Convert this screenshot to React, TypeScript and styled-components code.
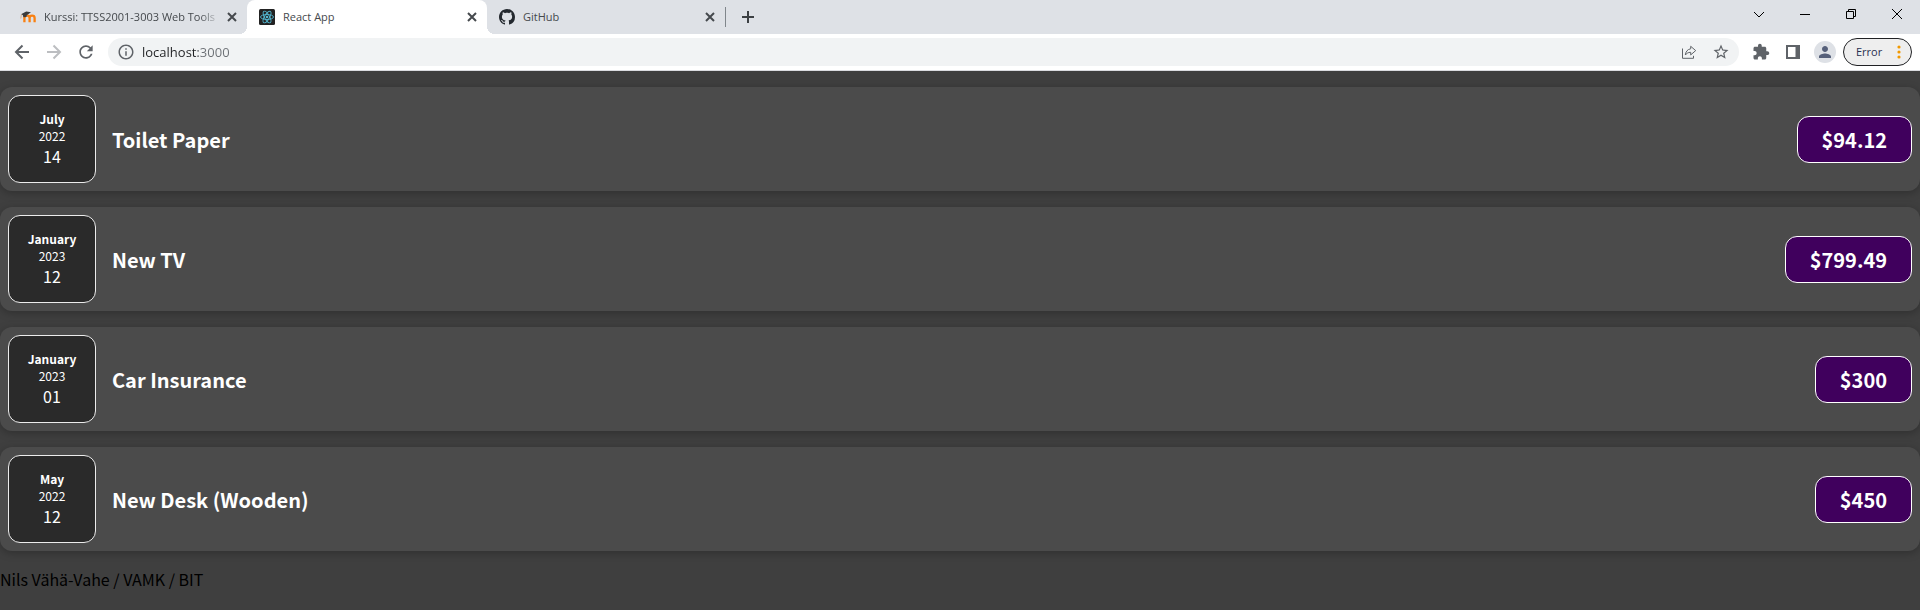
import React from "react";
import styled, { createGlobalStyle } from "styled-components";

const GlobalStyle = createGlobalStyle`
  *, *::before, *::after { box-sizing: border-box; }
  html, body, #root { min-height: 100vh; }
  body {
    margin: 0;
    background: #3f3f3f;
    font-family: "Noto Sans CJK JP", "Noto Sans", sans-serif;
  }
  button, input { font: inherit; }
`;

const chromeFont = `"Open Sans", "Noto Sans", sans-serif`;

const Browser = styled.div`
  display: flex;
  flex-direction: column;
  min-height: 100vh;
`;

const TabStrip = styled.header`
  display: flex;
  height: 34px;
  background: #dee1e6;
  font: 11px/16px ${chromeFont};
`;

const Tabs = styled.nav`
  display: flex;
  align-items: stretch;
`;

const Tab = styled.div<{ $active?: boolean; $width: number; $inset?: number }>`
  position: relative;
  display: flex;
  align-items: center;
  gap: 4px;
  width: ${(p) => p.$width}px;
  padding: 0 7px 0 ${(p) => p.$inset ?? 12}px;
  border-radius: 8px 8px 0 0;
  background: ${(p) => (p.$active ? "#ffffff" : "transparent")};

  &::before,
  &::after {
    content: "";
    display: ${(p) => (p.$active ? "block" : "none")};
    position: absolute;
    bottom: 0;
    width: 8px;
    height: 8px;
  }
  &::before {
    left: -8px;
    background: radial-gradient(circle at 0 0, transparent 8px, #ffffff 8px);
  }
  &::after {
    right: -8px;
    background: radial-gradient(circle at 100% 0, transparent 8px, #ffffff 8px);
  }
`;

const PlainButton = styled.button`
  display: flex;
  align-items: center;
  justify-content: center;
  flex: none;
  padding: 0;
  border: 0;
  background: none;
  color: #5f6368;
`;

const TabTitle = styled(PlainButton)<{ $fade?: boolean }>`
  flex: 1;
  min-width: 0;
  padding-left: 4px;
  justify-content: flex-start;
  overflow: hidden;
  white-space: nowrap;
  color: #45494d;
  mask-image: ${(p) =>
    p.$fade
      ? "linear-gradient(to right, #000 calc(100% - 20px), transparent)"
      : "none"};
`;

const CloseButton = styled(PlainButton)`
  width: 16px;
  height: 16px;
  color: #45494d;
`;

const NewTab = styled.div`
  display: flex;
  align-items: center;
`;

const Divider = styled.span`
  width: 1px;
  height: 20px;
  background: #80868b;
`;

const NewTabButton = styled(PlainButton)`
  width: 28px;
  height: 28px;
  margin-left: 8px;
  color: #3c4043;
`;

const WindowControls = styled.div`
  display: flex;
  height: 28px;
  margin-left: auto;
`;

const WindowButton = styled(PlainButton)`
  width: 46px;
  color: #000000;
`;

const Toolbar = styled.div`
  display: flex;
  align-items: center;
  gap: 8px;
  height: 37px;
  padding: 0 8px 1px;
  border-bottom: 1px solid #dadce0;
  background: #ffffff;
  font: 13px/20px ${chromeFont};
`;

const NavGroup = styled.div`
  display: flex;
  gap: 4px;
`;

const ToolButton = styled(PlainButton)`
  width: 28px;
  height: 28px;

  &:disabled {
    color: #bcbec1;
  }
`;

const AddressBar = styled.div`
  display: flex;
  flex: 1;
  align-items: center;
  height: 28px;
  padding: 0 4px;
  border-radius: 14px;
  background: #f1f3f4;
`;

const AddressInput = styled.input`
  flex: 1;
  min-width: 0;
  height: 20px;
  margin-left: 2px;
  padding: 0;
  border: 0;
  outline: 0;
  background: linear-gradient(to right, #202124 56px, #6b6f74 56px);
  background-clip: text;
  color: transparent;
`;

const Actions = styled.div`
  display: flex;
  align-items: center;
  gap: 4px;
`;

const Avatar = styled(PlainButton)`
  width: 22px;
  height: 22px;
  margin: 0 3px;
  overflow: hidden;
  border-radius: 50%;
  background: #dee1e6;
  color: #56607a;
`;

const ErrorButton = styled(PlainButton)`
  justify-content: space-between;
  width: 69px;
  height: 28px;
  padding: 0 5px 0 12px;
  border: 1px solid #202124;
  border-radius: 14px;
  background: #eeeeee;
  color: #2a3050;
  font-size: 11px;
`;

const Page = styled.main`
  flex: 1;
  background: #3f3f3f;
`;

const ExpenseList = styled.ul`
  display: flex;
  flex-direction: column;
  gap: 16px;
  margin: 0;
  padding: 16px 0;
  list-style: none;
`;

const ExpenseCard = styled.li`
  display: flex;
  align-items: center;
  gap: 16px;
  padding: 8px;
  border-radius: 12px;
  background: #4b4b4b;
  box-shadow: 0 2px 8px rgba(0, 0, 0, 0.25);
`;

const DateBox = styled.time`
  display: flex;
  flex-direction: column;
  align-items: center;
  justify-content: center;
  width: 88px;
  height: 88px;
  border: 1px solid #ececec;
  border-radius: 12px;
  background: #2a2a2a;
  color: #ffffff;
`;

const Month = styled.span`
  font-size: 12px;
  font-weight: 700;
  line-height: 17px;
`;

const Year = styled.span`
  font-size: 12px;
  line-height: 17px;
`;

const Day = styled.span`
  font-size: 16px;
  line-height: 24px;
`;

const Title = styled.h2`
  flex: 1;
  margin: 0;
  color: #ffffff;
  font-size: 20px;
  line-height: 29px;
`;

const Price = styled.div`
  padding: 8px 24px;
  border: 1px solid #ffffff;
  border-radius: 12px;
  background: #40005d;
  color: #ffffff;
  font-size: 20px;
  font-weight: 700;
  line-height: 29px;
`;

const Author = styled.footer`
  color: #000000;
  font-size: 16px;
  line-height: 24px;
`;

const MoodleIcon = () => (
  <svg width="16" height="16" viewBox="0 0 16 16" aria-hidden="true">
    <path d="M4.400 13.200V9q0-2.300 2.600-2.300T9.600 9v4.200M9.600 13.200V9q0-2.300 2.500-2.300T14.600 9v4.200" fill="none" stroke="#f98012" strokeWidth="2.300" />
    <path d="M1 5.200 6.200 2.600 11 3.200 6.800 6.200 6.400 8 3.400 8.200 2.800 6Z" fill="#3c3c3c" />
    <path d="M1.400 5.500.8 9.500" fill="none" stroke="#d9a77c" strokeWidth=".8" />
  </svg>
);

const ReactIcon = () => (
  <svg width="16" height="16" viewBox="0 0 16 16" aria-hidden="true">
    <rect width="16" height="16" rx="1.500" fill="#222222" />
    <g fill="none" stroke="#53b8d1" strokeWidth=".9">
      <ellipse cx="8" cy="8" rx="6.500" ry="2.500" />
      <ellipse cx="8" cy="8" rx="6.500" ry="2.500" transform="rotate(60 8 8)" />
      <ellipse cx="8" cy="8" rx="6.500" ry="2.500" transform="rotate(120 8 8)" />
    </g>
    <circle cx="8" cy="8" r="1.300" fill="#53b8d1" />
  </svg>
);

const GitHubIcon = () => (
  <svg width="16" height="16" viewBox="0 0 16 16" fill="#24292f" aria-hidden="true">
    <path d="M8 0C3.58 0 0 3.58 0 8c0 3.54 2.29 6.53 5.47 7.59.4.07.55-.17.55-.38 0-.19-.01-.82-.01-1.49-2.01.37-2.53-.49-2.69-.94-.09-.23-.48-.94-.82-1.13-.28-.15-.68-.52-.01-.53.63-.01 1.08.58 1.23.82.72 1.21 1.87.87 2.33.66.07-.52.28-.87.51-1.07-1.78-.2-3.64-.89-3.64-3.95 0-.87.31-1.59.82-2.15-.08-.2-.36-1.02.08-2.12 0 0 .67-.21 2.2.82.64-.18 1.32-.27 2-.27s1.36.09 2 .27c1.53-1.04 2.2-.82 2.2-.82.44 1.1.16 1.92.08 2.12.51.56.82 1.27.82 2.15 0 3.07-1.87 3.75-3.65 3.95.29.25.54.73.54 1.48 0 1.07-.01 1.93-.01 2.2 0 .21.15.46.55.38A8.01 8.01 0 0 0 16 8c0-4.42-3.58-8-8-8Z" />
  </svg>
);

const StrokeIcon = ({ d, size = 16, weight = 2 }: { d: string; size?: number; weight?: number }) => (
  <svg width={size} height={size} viewBox={`0 0 ${size} ${size}`} fill="none" stroke="currentColor" strokeWidth={weight} aria-hidden="true">
    <path d={d} />
  </svg>
);

const FillIcon = ({ d, size = 18 }: { d: string; size?: number }) => (
  <svg width={size} height={size} viewBox="0 0 24 24" fill="currentColor" aria-hidden="true">
    <path d={d} />
  </svg>
);

const tabs = [
  { title: "Kurssi: TTSS2001-3003 Web Tools", icon: <MoodleIcon />, fade: true, width: 247, inset: 20 },
  { title: "React App", icon: <ReactIcon />, active: true, width: 240 },
  { title: "GitHub", icon: <GitHubIcon />, width: 238 },
];

const expenses = [
  { title: "Toilet Paper", price: "$94.12", month: "July", year: "2022", day: "14", iso: "2022-07-14" },
  { title: "New TV", price: "$799.49", month: "January", year: "2023", day: "12", iso: "2023-01-12" },
  { title: "Car Insurance", price: "$300", month: "January", year: "2023", day: "01", iso: "2023-01-01" },
  { title: "New Desk (Wooden)", price: "$450", month: "May", year: "2022", day: "12", iso: "2022-05-12" },
];

export default function App() {
  return (
    <>
      <GlobalStyle />
      <Browser>
        <TabStrip>
          <Tabs aria-label="Open tabs">
            {tabs.map((tab) => (
              <Tab key={tab.title} $active={tab.active} $width={tab.width} $inset={tab.inset}>
                {tab.icon}
                <TabTitle $fade={tab.fade}>{tab.title}</TabTitle>
                <CloseButton aria-label={`Close ${tab.title}`}>
                  <StrokeIcon d="m4 4 8 8m0-8-8 8" />
                </CloseButton>
              </Tab>
            ))}
          </Tabs>
          <NewTab>
            <Divider />
            <NewTabButton aria-label="New tab">
              <StrokeIcon d="M8 2v12M2 8h12" />
            </NewTabButton>
          </NewTab>
          <WindowControls>
            <WindowButton aria-label="Search tabs">
              <StrokeIcon d="m3 6 5 5 5-5" weight={1} />
            </WindowButton>
            <WindowButton aria-label="Minimize">
              <StrokeIcon d="M3 8.500h10" weight={1} />
            </WindowButton>
            <WindowButton aria-label="Restore">
              <StrokeIcon d="M3.500 5.500h7v7h-7zM5.500 5V3.500h7v7H11" weight={1} />
            </WindowButton>
            <WindowButton aria-label="Close window">
              <StrokeIcon d="m3 3 10 10m0-10L3 13" weight={1} />
            </WindowButton>
          </WindowControls>
        </TabStrip>

        <Toolbar>
          <NavGroup>
            <ToolButton aria-label="Back">
              <StrokeIcon d="M15 8H2m6.500-6.500L2 8l6.500 6.500" />
            </ToolButton>
            <ToolButton aria-label="Forward" disabled>
              <StrokeIcon d="M1 8h13M7.500 1.500 14 8l-6.500 6.500" />
            </ToolButton>
            <ToolButton aria-label="Reload">
              <FillIcon size={20} d="M17.65 6.350C16.200 4.900 14.210 4 12 4c-4.420 0-7.990 3.580-7.990 8s3.570 8 7.990 8c3.730 0 6.840-2.550 7.730-6h-2.080c-.82 2.330-3.040 4-5.650 4-3.310 0-6-2.690-6-6s2.690-6 6-6c1.660 0 3.140.69 4.220 1.780L13 11h7V4l-2.350 2.350z" />
            </ToolButton>
          </NavGroup>
          <AddressBar>
            <ToolButton aria-label="Site information">
              <FillIcon d="M11 7h2v2h-2zm0 4h2v6h-2zm1-9C6.480 2 2 6.480 2 12s4.480 10 10 10 10-4.480 10-10S17.520 2 12 2zm0 18c-4.410 0-8-3.590-8-8s3.590-8 8-8 8 3.590 8 8-3.590 8-8 8z" />
            </ToolButton>
            <AddressInput aria-label="Address" defaultValue="localhost:3000" />
            <Actions>
              <ToolButton aria-label="Share">
                <StrokeIcon d="M1.500 4.500v9.800h11v-2.500M9.700 2.300l5 4.300-5 4.300V8.300C7 8.300 5.500 9.500 4.300 11c.4-3.200 2-5.700 5.400-6.200z" weight={1} />
              </ToolButton>
              <ToolButton aria-label="Bookmark">
                <FillIcon d="m22 9.240-7.190-.62L12 2 9.190 8.630 2 9.240l5.460 4.730L5.820 21 12 17.270 18.180 21l-1.630-7.030L22 9.240zM12 15.400l-3.760 2.270 1-4.280-3.320-2.880 4.380-.38L12 6.100l1.710 4.040 4.380.38-3.320 2.880 1 4.280L12 15.400z" />
              </ToolButton>
            </Actions>
          </AddressBar>
          <Actions>
            <ToolButton aria-label="Extensions">
              <FillIcon d="M20.500 11H19V7c0-1.100-.9-2-2-2h-4V3.500C13 2.120 11.880 1 10.500 1S8 2.120 8 3.500V5H4c-1.100 0-1.990.9-1.990 2v3.800H3.500c1.490 0 2.700 1.210 2.700 2.700s-1.210 2.700-2.700 2.700H2V20c0 1.100.9 2 2 2h3.800v-1.500c0-1.490 1.210-2.700 2.700-2.700 1.490 0 2.700 1.210 2.700 2.700V22H17c1.100 0 2-.9 2-2v-4h1.500c1.380 0 2.500-1.120 2.500-2.500S21.880 11 20.500 11z" />
            </ToolButton>
            <ToolButton aria-label="Side panel">
              <StrokeIcon d="M2 2h12v12H2zM11.500 2v12M12.500 2v12" />
            </ToolButton>
            <Avatar aria-label="Profile">
              <FillIcon size={18} d="M12 12c2.210 0 4-1.790 4-4s-1.790-4-4-4-4 1.790-4 4 1.790 4 4 4zm0 2c-2.670 0-8 1.340-8 4v2h16v-2c0-2.660-5.330-4-8-4z" />
            </Avatar>
            <ErrorButton>
              Error
              <svg width="14" height="14" viewBox="0 0 14 14" fill="#f29900" aria-hidden="true">
                <circle cx="7" cy="2" r="1.600" />
                <circle cx="7" cy="7" r="1.600" />
                <circle cx="7" cy="12" r="1.600" />
              </svg>
            </ErrorButton>
          </Actions>
        </Toolbar>

        <Page>
          <ExpenseList>
            {expenses.map((e) => (
              <ExpenseCard key={e.title}>
                <DateBox dateTime={e.iso}>
                  <Month>{e.month}</Month>
                  <Year>{e.year}</Year>
                  <Day>{e.day}</Day>
                </DateBox>
                <Title>{e.title}</Title>
                <Price>{e.price}</Price>
              </ExpenseCard>
            ))}
          </ExpenseList>
          <Author>Nils Vähä-Vahe / VAMK / BIT</Author>
        </Page>
      </Browser>
    </>
  );
}
